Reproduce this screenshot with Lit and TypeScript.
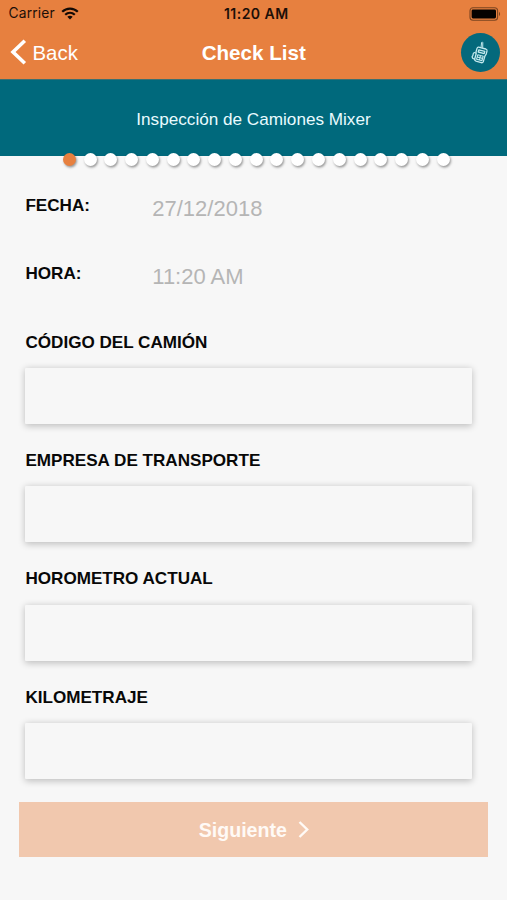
import { LitElement, html, css } from "lit";
import { customElement, property } from "lit/decorators.js";

@customElement("status-bar")
class StatusBar extends LitElement {
  static styles = css`
    :host {
      display: grid;
      grid-template-columns: 1fr auto 1fr;
      align-items: center;
      height: 27px;
      padding: 0 5px 0 8.5px;
      color: #1c0f08;
      font: 13.8px/27px Inter, "Liberation Sans", sans-serif;
    }
    .carrier { display: flex; align-items: center; gap: 6.5px; letter-spacing: 0.15px; }
    .time { font-weight: 600; font-size: 14px; letter-spacing: 0.46px; padding-left: 2px; }
    .battery { justify-self: end; display: block; }
    svg { display: block; }
  `;
  render() {
    return html`
      <div class="carrier">
        <span>Carrier</span>
        <svg width="18" height="13" viewBox="0 0 18 13" fill="none" stroke="#140a05" stroke-width="2.2">
          <path d="M1.2 4.8C5.6 .5 12.4 .5 16.8 4.8" />
          <path d="M4.2 7.8C7 5.2 11 5.2 13.8 7.8" />
          <path d="M9 12.5L6.3 9.8Q9 7.8 11.7 9.8Z" fill="#140a05" stroke="none" />
        </svg>
      </div>
      <div class="time">11:20 AM</div>
      <svg class="battery" width="33" height="14" viewBox="0 0 33 14">
        <rect x="1" y=".8" width="27.6" height="12.4" rx="3" fill="none" stroke="#7b4421" stroke-width="1.1" />
        <rect x="2.6" y="2.6" width="24.4" height="8.8" rx="1.4" fill="#050200" />
        <path d="M30 4.8Q32.2 7 30 9.2Z" fill="#7b4421" />
      </svg>
    `;
  }
}

@customElement("nav-bar")
class NavBar extends LitElement {
  static styles = css`
    :host {
      display: grid;
      grid-template-columns: 1fr auto 1fr;
      align-items: center;
      height: 52px;
      padding: 0 7.5px 1px 10px;
      box-sizing: border-box;
      color: #fff;
    }
    .back { display: flex; align-items: center; gap: 5.5px; font-size: 20.4px; line-height: 24px; margin-top: -2px; }
    .back span { padding-top: 3px; }
    .title { font-size: 20.6px; font-weight: 700; line-height: 24px; padding-right: 2px; }
    .radio {
      justify-self: end;
      display: grid;
      place-items: center;
      width: 39px;
      height: 39px;
      border-radius: 50%;
      background: #04697c;
    }
    svg { display: block; }
  `;
  render() {
    return html`
      <div class="back">
        <svg width="17" height="26" viewBox="0 0 17 26" fill="none" stroke="#fff" stroke-width="3.6">
          <path d="M14.8 1.7L3 13L14.8 24.3" />
        </svg>
        <span>Back</span>
      </div>
      <div class="title">Check List</div>
      <div class="radio">
        <svg width="22" height="26" viewBox="0 0 22 26" fill="none" stroke="#c3e9ee" stroke-width="1.3" stroke-linejoin="round" stroke-linecap="round">
          <path d="M12.1 7L12.6 2.4Q13.3 1.6 13.8 2.6L13.7 7.4" stroke-width="1" />
          <path d="M9.6 7.2L16.8 9Q18.3 9.6 18 11L17.2 14.2L16 15.8L14.4 21.4Q13.8 23 12.2 22.7L7 21.2Q5.4 20.6 5.7 19L7.1 14L7 12L8 8.4Q8.5 7 9.6 7.2Z" />
          <path d="M9.8 9.8L15.8 11.4L15.2 13.6L9.2 12Z" />
          <path d="M8.8 14.8L14.2 16.2L13 20.6L7.6 19.2ZM11.5 15.5L10.3 19.9M8.2 17L13.6 18.4" stroke-width="1.1" />
          <path d="M6.8 13Q4.4 12 4.2 14T3.2 16.4Q3 18.8 5.6 19.2" />
        </svg>
      </div>
    `;
  }
}

@customElement("step-dots")
class StepDots extends LitElement {
  static styles = css`
    :host { display: flex; justify-content: space-between; }
    .dot {
      width: 13px;
      height: 13px;
      border-radius: 50%;
      background: #fff;
      box-shadow: 1px 1.5px 2.5px rgba(0, 0, 0, 0.4);
    }
    .active { background: #e7803f; }
  `;
  @property({ type: Number }) count = 0;
  @property({ type: Number }) current = 0;
  render() {
    return Array.from({ length: this.count }, (_, i) =>
      html`<span class=${i === this.current ? "dot active" : "dot"}></span>`
    );
  }
}

@customElement("form-field")
class FormField extends LitElement {
  static styles = css`
    :host { display: block; height: 118.4px; }
    .label {
      display: block;
      height: 35.2px;
      font-size: 17.1px;
      font-weight: 700;
      line-height: 20px;
      color: #080808;
      white-space: nowrap;
    }
    .input {
      display: block;
      box-sizing: border-box;
      width: 447px;
      height: 56px;
      padding: 0 12px;
      border: 0;
      border-radius: 1px;
      outline: none;
      background: #f7f7f7;
      box-shadow: 0 1.5px 7px rgba(0, 0, 0, 0.24);
      font: inherit;
    }
  `;
  @property() label = "";
  render() {
    return html`
      <label class="label" for="value">${this.label}</label>
      <input class="input" id="value" />
    `;
  }
}

@customElement("app-root")
class AppRoot extends LitElement {
  static styles = css`
    :host {
      display: flex;
      flex-direction: column;
      height: 900px;
      overflow: hidden;
      background: #f7f7f7;
      font-family: "Liberation Sans", Arial, sans-serif;
    }
    .top { background: #e7803f; }
    .banner {
      display: grid;
      place-items: center;
      height: 77px;
      box-sizing: border-box;
      padding-top: 3px;
      background: #00697c;
      border-top: 1px solid #3d6f6e;
      color: #e9fbff;
      font-size: 17.15px;
    }
    .steps { margin: -3.5px 57.2px 0 62.8px; }
    .form { padding: 26px 25.4px 0; }
    .row {
      display: grid;
      grid-template-columns: 126.9px 1fr;
      height: 68.4px;
    }
    .row:nth-child(2) { height: 72.7px; }
    .name { font-size: 17.1px; font-weight: 700; line-height: 27px; color: #080808; }
    .value { font-size: 22px; line-height: 34px; color: #b5b5b5; }
    .next {
      display: flex;
      align-items: center;
      justify-content: center;
      gap: 11px;
      flex: none;
      width: 469px;
      height: 54.5px;
      margin: -3.9px 0 0 19.3px;
      padding: 1px 0 0;
      border: 0;
      background: #f1c8ae;
      color: #fffaf6;
      font: 700 19.6px/24px "Liberation Sans", Arial, sans-serif;
    }
    .next svg { display: block; margin-top: -2px; }
  `;
  private fields = ["CÓDIGO DEL CAMIÓN", "EMPRESA DE TRANSPORTE", "HOROMETRO ACTUAL", "KILOMETRAJE"];
  render() {
    return html`
      <header class="top">
        <status-bar></status-bar>
        <nav-bar></nav-bar>
      </header>
      <div class="banner">Inspección de Camiones Mixer</div>
      <step-dots class="steps" count="19" current="0"></step-dots>
      <main class="form">
        <div class="row"><span class="name">FECHA:</span><span class="value">27/12/2018</span></div>
        <div class="row"><span class="name">HORA:</span><span class="value">11:20 AM</span></div>
        ${this.fields.map((f) => html`<form-field label=${f}></form-field>`)}
      </main>
      <button class="next">
        <span>Siguiente</span>
        <svg width="11" height="17" viewBox="0 0 11 17" fill="none" stroke="#fffaf6" stroke-width="2.4">
          <path d="M1.5 1L9.2 8.5L1.5 16" />
        </svg>
      </button>
    `;
  }
}
